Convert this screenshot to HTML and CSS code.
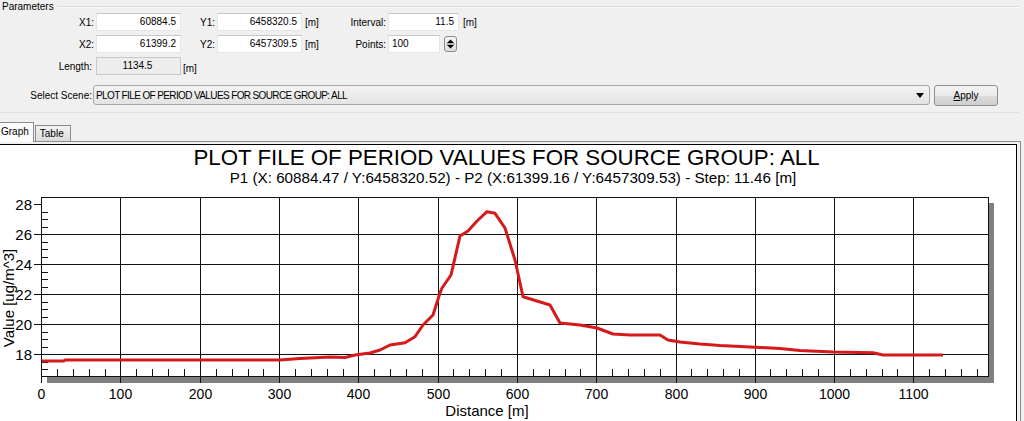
FILE: index.html
```html
<!DOCTYPE html>
<html>
<head>
<meta charset="utf-8">
<link rel="stylesheet" href="styles.css">
</head>
<body>
<div class="groupbox">
  <div class="gb-head"><span class="gb-title">Parameters</span><span class="gb-line"></span></div>
  <div class="form">
    <div class="lbl">X1:</div><div class="field">60884.5</div>
    <div class="lbl">Y1:</div><div class="field">6458320.5</div>
    <div class="unit">[m]</div>
    <div class="lbl">Interval:</div><div class="field">11.5</div>
    <div class="unit unit-int">[m]</div>

    <div class="lbl">X2:</div><div class="field">61399.2</div>
    <div class="lbl">Y2:</div><div class="field">6457309.5</div>
    <div class="unit">[m]</div>
    <div class="lbl">Points:</div>
    <div class="spin">
      <div class="field field-left">100</div>
      <div class="spin-btn">
        <svg width="11" height="14" viewBox="0 0 11 14"><path d="M2 6 L5.5 2.5 L9 6 Z" fill="#000"/><path d="M1.5 7 H9.5" stroke="#7a7a7a" stroke-width="1"/><path d="M2 8 L5.5 11.5 L9 8 Z" fill="#000"/></svg>
      </div>
    </div>
    <div></div>

    <div class="lbl lbl-len">Length:</div><div class="field field-ro">1134.5</div>
    <div class="unit unit-len">[m]</div>
  </div>
  <div class="scene">
    <div class="scene-lbl">Select Scene:</div>
    <div class="combo"><span class="combo-text">PLOT FILE OF PERIOD VALUES FOR SOURCE GROUP: ALL</span><span class="combo-arrow"></span></div>
    <div class="btn"><u>A</u>pply</div>
  </div>
</div>

<div class="tabwrap">
  <div class="tabs">
    <div class="tab tab-active">Graph</div>
    <div class="tab">Table</div>
  </div>
  <div class="tabpage">
    <div class="chart">
      <div class="chart-title">PLOT FILE OF PERIOD VALUES FOR SOURCE GROUP: ALL</div>
      <div class="chart-sub">P1 (X: 60884.47 / Y:6458320.52) - P2 (X:61399.16 / Y:6457309.53) - Step: 11.46 [m]</div>
      <svg class="plot" width="1016" height="235" viewBox="0 186 1016 235">
        <rect x="47" y="203" width="947" height="180" fill="#808080"/>
        <rect x="41.5" y="197.5" width="947" height="179" fill="#fff" stroke="#111" stroke-width="1"/>
        <g stroke="#111" stroke-width="1" fill="none">
          <path d="M120.5 197.5V383 M200.5 197.5V383 M279.5 197.5V383 M358.5 197.5V383 M438.5 197.5V383 M517.5 197.5V383 M596.5 197.5V383 M676.5 197.5V383 M755.5 197.5V383 M834.5 197.5V383 M913.5 197.5V383 M41.5 376V383"/>
          <path d="M34 204.5H41.5 M34 234.5H988.5 M34 264.5H988.5 M34 294.5H988.5 M34 324.5H988.5 M34 354.5H988.5"/>
          <path d="M41.5 212.5H48 M41.5 219.5H48 M41.5 227.5H48 M41.5 242.5H48 M41.5 249.5H48 M41.5 257.5H48 M41.5 272.5H48 M41.5 279.5H48 M41.5 287.5H48 M41.5 302.5H48 M41.5 309.5H48 M41.5 317.5H48 M41.5 332.5H48 M41.5 339.5H48 M41.5 347.5H48 M41.5 362.5H48 M41.5 369.5H48"/>
          <path d="M57.5 369V376 M73.5 369V376 M89.5 369V376 M105.5 369V376 M136.5 369V376 M152.5 369V376 M168.5 369V376 M184.5 369V376 M216.5 369V376 M232.5 369V376 M248.5 369V376 M263.5 369V376 M295.5 369V376 M311.5 369V376 M327.5 369V376 M343.5 369V376 M374.5 369V376 M390.5 369V376 M406.5 369V376 M422.5 369V376 M453.5 369V376 M469.5 369V376 M485.5 369V376 M501.5 369V376 M533.5 369V376 M549.5 369V376 M565.5 369V376 M580.5 369V376 M612.5 369V376 M628.5 369V376 M644.5 369V376 M660.5 369V376 M691.5 369V376 M707.5 369V376 M723.5 369V376 M739.5 369V376 M770.5 369V376 M786.5 369V376 M802.5 369V376 M818.5 369V376 M850.5 369V376 M866.5 369V376 M882.5 369V376 M897.5 369V376 M929.5 369V376 M945.5 369V376 M961.5 369V376 M977.5 369V376"/>
        </g>
        <polyline fill="none" stroke="#d41a1a" stroke-width="3" stroke-linejoin="round" points="42,361 64,361 65,360 280,360 300,358.5 330,357 345,357.5 355,355 370,353 380,350 390,345 405,342.7 415,336.7 423,325 433,315 440,293 442,288 451,275 460,236 468,231 477,221 487,211.7 495,213.3 505,228 515,260 523,296.7 550,305 560,323 580,325 597,328 613,334 630,335 660,335 668,340 680,342 700,344 720,345.5 740,346.5 760,347.5 780,348.5 800,350.5 833,352 873,352.7 883,355 943,355"/>
        <g class="ylab">
          <text x="32" y="209.5">28</text>
          <text x="32" y="239.5">26</text>
          <text x="32" y="269.5">24</text>
          <text x="32" y="299.5">22</text>
          <text x="32" y="329.5">20</text>
          <text x="32" y="359.5">18</text>
        </g>
        <g class="xlab">
          <text x="41.5" y="399">0</text>
          <text x="120.5" y="399">100</text>
          <text x="200.5" y="399">200</text>
          <text x="279.5" y="399">300</text>
          <text x="358.5" y="399">400</text>
          <text x="438.5" y="399">500</text>
          <text x="517.5" y="399">600</text>
          <text x="596.5" y="399">700</text>
          <text x="676.5" y="399">800</text>
          <text x="755.5" y="399">900</text>
          <text x="834.5" y="399">1000</text>
          <text x="913.5" y="399">1100</text>
        </g>
        <text class="axtitle" x="487" y="416">Distance [m]</text>
        <text class="axtitle" transform="translate(14 298) rotate(-90)">Value [ug/m^3]</text>
      </svg>
    </div>
  </div>
</div>
</body>
</html>
```

FILE: styles.css
```css
html, body {
  margin: 0;
  padding: 0;
}
body {
  width: 1024px;
  height: 421px;
  overflow: hidden;
  background: #f0f0f0;
  font-family: "Liberation Sans", Arial, sans-serif;
  font-size: 10px;
  color: #000;
}

.groupbox {
  height: 113px;
  box-sizing: border-box;
  border-bottom: 1px solid #e2e2e2;
  width: 1020px;
}
.gb-head {
  display: flex;
  align-items: center;
  height: 13px;
}
.gb-title {
  padding: 0 3px 0 2px;
  line-height: 13px;
}
.gb-line {
  flex: 1;
  border-top: 1px solid #dcdcdc;
  border-bottom: 1px solid #fafafa;
}

.form {
  display: grid;
  grid-template-columns: 96px 85px 36px 85px 30px 56px 71px auto;
  grid-auto-rows: 18px;
  row-gap: 4px;
  align-items: center;
}
.lbl {
  text-align: right;
  padding-right: 2px;
}
.lbl-len {
  padding-right: 4px;
}
.unit {
  padding-left: 3px;
}
.unit-int {
  padding-left: 4px;
}
.unit-len {
  padding-left: 2px;
  padding-top: 4px;
}
.field {
  height: 18px;
  box-sizing: border-box;
  background: #fff;
  border: 1px solid #e3e6ea;
  border-top-color: #c4c7cc;
  text-align: right;
  padding: 0 4px;
  line-height: 16px;
}
.field-left {
  text-align: left;
  padding-left: 3px;
  width: 52px;
}
.field-ro {
  background: #ededed;
  border-color: #c8c8c8;
  text-align: center;
  padding-right: 6px;
}
.spin {
  display: flex;
  align-items: center;
  gap: 4px;
  height: 18px;
}
.spin-btn {
  width: 13px;
  height: 16px;
  box-sizing: border-box;
  border: 1px solid #8a8a8a;
  border-radius: 3px;
  background: linear-gradient(#f6f6f6, #dedede);
  display: flex;
  align-items: center;
  justify-content: center;
}
.spin-btn svg {
  display: block;
}

.scene {
  display: flex;
  align-items: center;
  margin-top: 10px;
  height: 20px;
}
.scene-lbl {
  width: 92px;
  text-align: right;
  padding-right: 1px;
}
.combo {
  width: 837px;
  height: 20px;
  box-sizing: border-box;
  border: 1px solid #a8a8a8;
  border-radius: 3px;
  background: linear-gradient(#f4f4f4, #e3e3e3);
  display: flex;
  align-items: center;
  justify-content: space-between;
  padding: 0 5px 0 2px;
}
.combo-text {
  letter-spacing: -0.62px;
}
.combo-arrow {
  width: 0;
  height: 0;
  border-left: 4px solid transparent;
  border-right: 4px solid transparent;
  border-top: 5px solid #000;
}
.btn {
  margin-left: 4px;
  width: 64px;
  height: 21px;
  box-sizing: border-box;
  border: 1px solid #8e8f8f;
  border-radius: 3px;
  background: linear-gradient(#f3f3f3 0%, #ebebeb 50%, #dddddd 51%, #cfcfcf 100%);
  text-align: center;
  line-height: 19px;
}

.tabwrap {
  width: 1021px;
  margin-top: 9px;
}
.tabs {
  display: flex;
  align-items: flex-end;
  height: 19px;
  border-bottom: 1px solid #898c95;
}
.tab {
  height: 16px;
  box-sizing: border-box;
  border: 1px solid #898c95;
  border-bottom: none;
  padding: 0 6px 0 4px;
  line-height: 16px;
  background: linear-gradient(#f2f2f2, #dcdcdc);
  margin-left: 1px;
}
.tab-active {
  height: 20px;
  margin-bottom: -1px;
  margin-left: 0;
  background: #fbfbfb;
  padding: 0 4px 0 1px;
  border-left: none;
  line-height: 17px;
}
.tabpage {
  border-right: 1px solid #898c95;
  padding: 2px 3px 0 0;
}
.chart {
  width: 1016px;
  height: 277px;
  box-sizing: content-box;
  border-top: 1px solid #000;
  border-right: 1px solid #000;
  background: #fff;
  overflow: hidden;
  font-family: "Liberation Sans", Arial, sans-serif;
}
.chart-title {
  text-align: center;
  font-size: 22.3px;
  line-height: 24px;
  padding-top: 1px;
  padding-right: 3px;
}
.chart-sub {
  text-align: center;
  font-size: 15.2px;
  line-height: 16px;
  padding-left: 10px;
}
.plot {
  display: block;
}
.ylab text {
  font-size: 15px;
  text-anchor: end;
}
.xlab text {
  font-size: 14px;
  text-anchor: middle;
}
.axtitle {
  font-size: 15px;
  text-anchor: middle;
}
```
